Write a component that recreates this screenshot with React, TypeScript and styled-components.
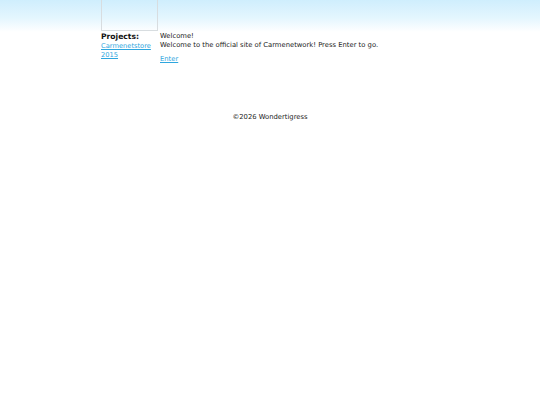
import React from 'react';
import styled, { createGlobalStyle } from 'styled-components';

const GlobalStyle = createGlobalStyle`
  html, body {
    margin: 0;
    padding: 0;
    background: #ffffff;
  }
  body {
    font-family: "DejaVu Sans", Verdana, sans-serif;
    font-size: 6.8px;
    color: #222222;
    min-height: 405px;
    background: linear-gradient(to bottom, #cfeefd 0px, #e4f6fe 18px, #ffffff 32px) no-repeat;
    background-size: 100% 32px;
  }
`;

const Page = styled.div`
  width: 338px;
  margin: 0 auto;
`;

const Layout = styled.div`
  display: flex;
  gap: 2px;
`;

const Sidebar = styled.aside`
  width: 57px;
  flex-shrink: 0;
`;

const LogoBox = styled.div`
  height: 30px;
  width: 55px;
  border: 1px solid #d8dde0;
  border-top: none;
`;

const SideTitle = styled.h3`
  margin: 1px 0 0;
  font-size: 7.6px;
  font-weight: bold;
  color: #111111;
  line-height: 10px;
`;

const SideLink = styled.a`
  display: block;
  color: #2ea6de;
  font-size: 6.7px;
  line-height: 8.5px;
  text-decoration: underline;
`;

const Main = styled.main`
  padding-top: 32px;
  line-height: 8.5px;
`;

const Paragraph = styled.p`
  margin: 0 0 6px;
`;

const EnterLink = styled.a`
  color: #2ea6de;
  text-decoration: underline;
`;

const Footer = styled.footer`
  text-align: center;
  margin-top: 49px;
  color: #222222;
`;

const App: React.FC = () => {
  return (
    <>
      <GlobalStyle />
      <Page>
        <Layout>
          <Sidebar>
            <LogoBox />
            <SideTitle>Projects:</SideTitle>
            <SideLink href="#carmenetstore">Carmenetstore 2015</SideLink>
          </Sidebar>
          <Main>
            <Paragraph>
              Welcome!
              <br />
              Welcome to the official site of Carmenetwork! Press Enter to go.
            </Paragraph>
            <EnterLink href="#enter">Enter</EnterLink>
          </Main>
        </Layout>
      </Page>
      <Footer>©2026 Wondertigress</Footer>
    </>
  );
};

export default App;
